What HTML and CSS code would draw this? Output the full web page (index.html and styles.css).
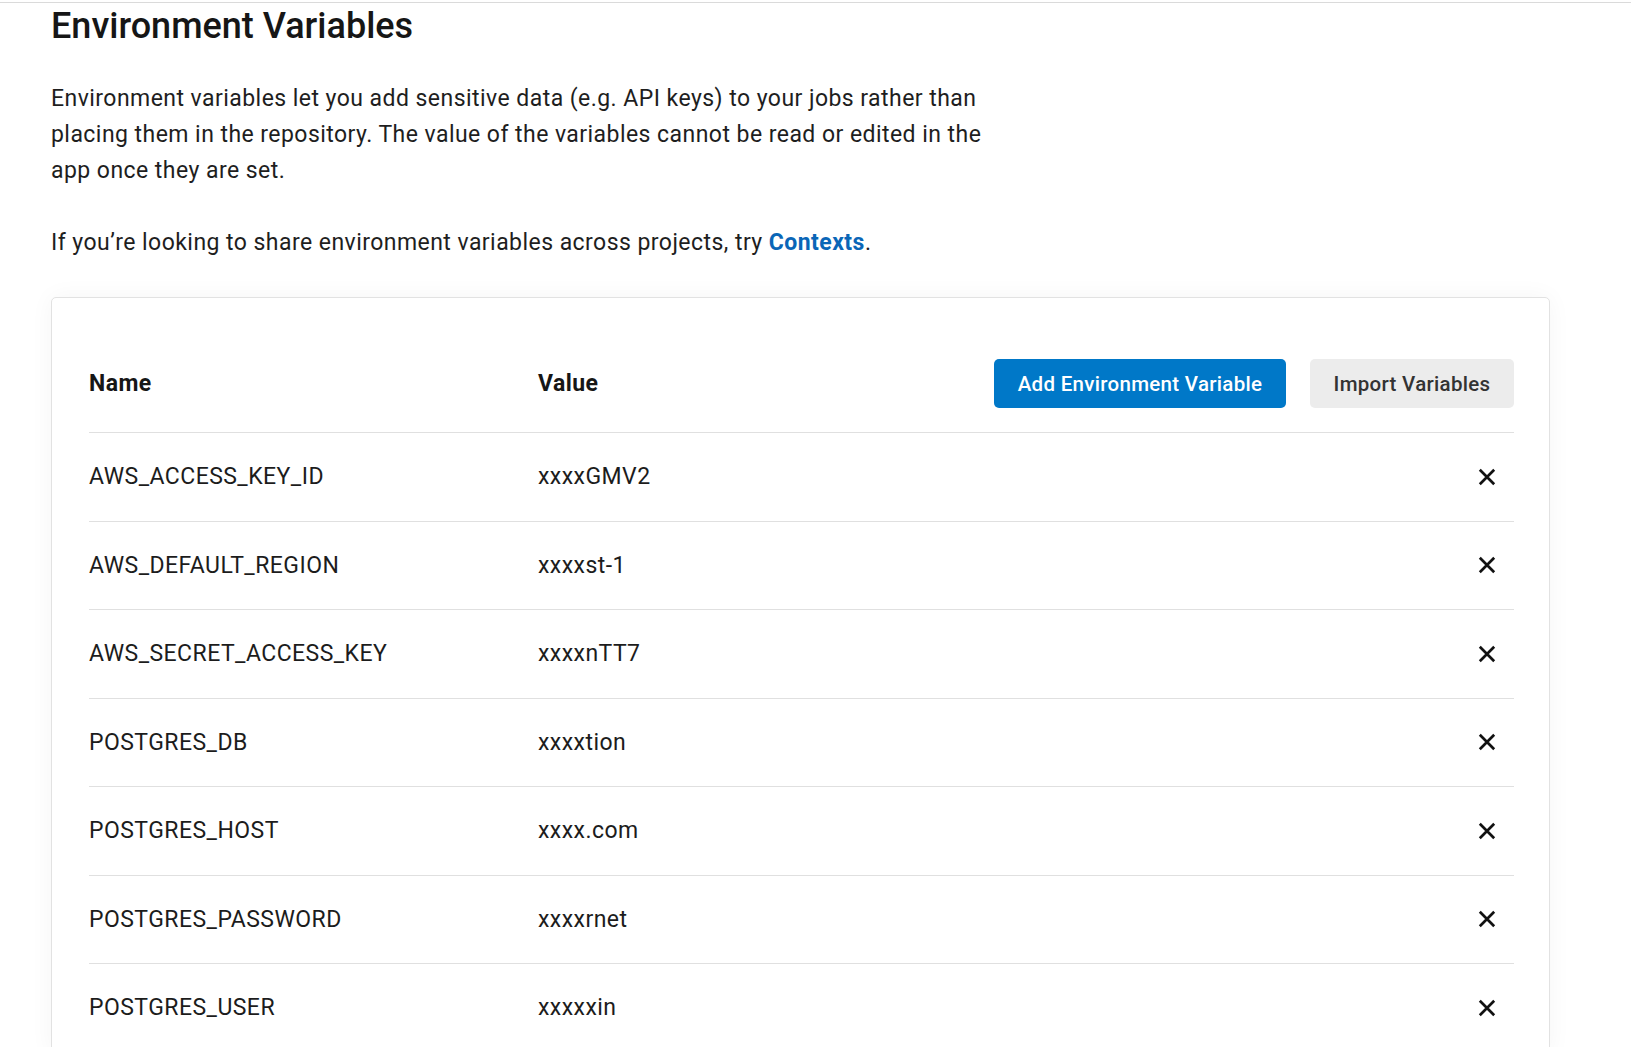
FILE: index.html
```html
<!DOCTYPE html>
<html lang="en">
<head>
<meta charset="utf-8">
<title>Environment Variables</title>
<link rel="stylesheet" href="styles.css">
</head>
<body>
<div class="topline"></div>
<main class="page">
  <h1 class="title">Environment Variables</h1>
  <p class="intro">Environment variables let you add sensitive data (e.g. API keys) to your jobs rather than placing them in the repository. The value of the variables cannot be read or edited in the app once they are set.</p>
  <p class="intro second">If you’re looking to share environment variables across projects, try <a class="link" href="#">Contexts</a>.</p>

  <section class="card">
    <div class="row head">
      <div class="col-name">Name</div>
      <div class="col-value">Value</div>
      <div class="actions">
        <button class="btn primary">Add Environment Variable</button>
        <button class="btn secondary">Import Variables</button>
      </div>
    </div>
    <div class="row item"><div class="col-name">AWS_ACCESS_KEY_ID</div><div class="col-value">xxxxGMV2</div><button class="remove" aria-label="Remove"><svg viewBox="0 0 18 18" width="18" height="18"><path d="M1.8 1.8L16.2 16.2M16.2 1.8L1.8 16.2"/></svg></button></div>
    <div class="row item"><div class="col-name">AWS_DEFAULT_REGION</div><div class="col-value">xxxxst-1</div><button class="remove" aria-label="Remove"><svg viewBox="0 0 18 18" width="18" height="18"><path d="M1.8 1.8L16.2 16.2M16.2 1.8L1.8 16.2"/></svg></button></div>
    <div class="row item"><div class="col-name">AWS_SECRET_ACCESS_KEY</div><div class="col-value">xxxxnTT7</div><button class="remove" aria-label="Remove"><svg viewBox="0 0 18 18" width="18" height="18"><path d="M1.8 1.8L16.2 16.2M16.2 1.8L1.8 16.2"/></svg></button></div>
    <div class="row item"><div class="col-name">POSTGRES_DB</div><div class="col-value">xxxxtion</div><button class="remove" aria-label="Remove"><svg viewBox="0 0 18 18" width="18" height="18"><path d="M1.8 1.8L16.2 16.2M16.2 1.8L1.8 16.2"/></svg></button></div>
    <div class="row item"><div class="col-name">POSTGRES_HOST</div><div class="col-value">xxxx.com</div><button class="remove" aria-label="Remove"><svg viewBox="0 0 18 18" width="18" height="18"><path d="M1.8 1.8L16.2 16.2M16.2 1.8L1.8 16.2"/></svg></button></div>
    <div class="row item"><div class="col-name">POSTGRES_PASSWORD</div><div class="col-value">xxxxrnet</div><button class="remove" aria-label="Remove"><svg viewBox="0 0 18 18" width="18" height="18"><path d="M1.8 1.8L16.2 16.2M16.2 1.8L1.8 16.2"/></svg></button></div>
    <div class="row item"><div class="col-name">POSTGRES_USER</div><div class="col-value">xxxxxin</div><button class="remove" aria-label="Remove"><svg viewBox="0 0 18 18" width="18" height="18"><path d="M1.8 1.8L16.2 16.2M16.2 1.8L1.8 16.2"/></svg></button></div>
  </section>
</main>
</body>
</html>
```
FILE: styles.css
```css
html, body {
  margin: 0;
  padding: 0;
  background: #ffffff;
}

body {
  font-family: Roboto, "Liberation Sans", Arial, sans-serif;
  color: #1a1a1a;
}

.topline {
  margin-top: 2px;
  border-top: 1px solid #dadada;
}

.page {
  padding: 0 81px 40px 51px;
}

.title {
  margin: 2px 0 0;
  font-size: 36px;
  line-height: 42px;
  font-weight: 500;
  color: #161616;
}

.intro {
  margin: 34px 0 0;
  max-width: 950px;
  font-size: 23px;
  letter-spacing: 0.45px;
  line-height: 36px;
  font-weight: 400;
  color: #1e1e1e;
}

.intro.second {
  margin-top: 36px;
}

.link {
  color: #0a66b7;
  font-weight: 700;
  text-decoration: none;
}

.card {
  margin-top: 36px;
  border: 1px solid #e2e2e2;
  border-radius: 5px;
  background: #ffffff;
  box-shadow: 0 0 24px rgba(0, 0, 0, 0.045);
  padding: 37px 35px 0 37px;
}

.row {
  display: flex;
  align-items: center;
  border-bottom: 1px solid #e0e0e0;
}

.row.head {
  padding: 24px 0;
}

.row.item {
  height: 87.5px;
}

.col-name {
  width: 449px;
  flex: none;
  font-size: 23px;
  letter-spacing: 0.45px;
}

.col-value {
  flex: 1;
  font-size: 23px;
  letter-spacing: 0.45px;
}

.row.head .col-name,
.row.head .col-value {
  font-weight: 700;
  color: #161616;
}

.row.item .col-name,
.row.item .col-value {
  color: #1c1c1c;
}

.actions {
  display: flex;
  gap: 24px;
}

.btn {
  font-family: Roboto, "Liberation Sans", Arial, sans-serif;
  font-size: 20.5px;
  letter-spacing: 0.3px;
  font-weight: 500;
  height: 49px;
  border: none;
  border-radius: 5px;
  cursor: pointer;
}

.btn.primary {
  width: 292px;
  background: #0078c8;
  color: #ffffff;
}

.btn.secondary {
  width: 204px;
  background: #ececec;
  color: #333333;
}

.remove {
  display: flex;
  align-items: center;
  justify-content: center;
  width: 18px;
  height: 18px;
  margin-right: 18px;
  padding: 0;
  border: none;
  background: none;
  cursor: pointer;
}

.remove svg {
  display: block;
  fill: none;
  stroke: #111111;
  stroke-width: 2.7;
}
```
